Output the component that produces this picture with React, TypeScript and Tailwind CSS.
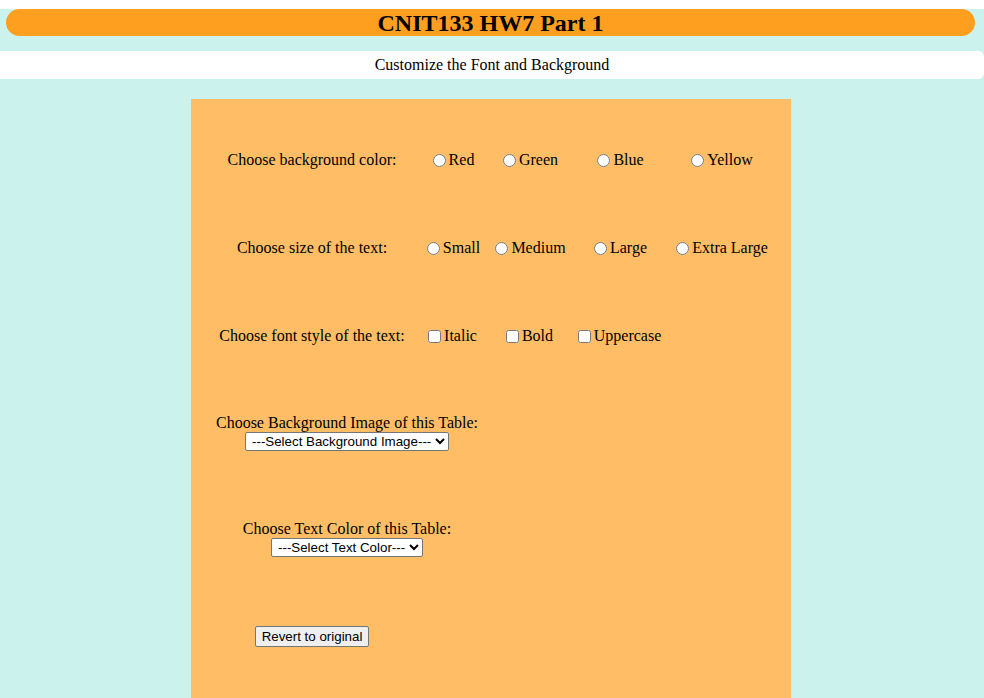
import React from "react";

const serif = "font-['Liberation_Serif','Times_New_Roman',serif]";
const sans = "font-['Liberation_Sans',Arial,sans-serif]";

const cols = "grid grid-cols-[214px_70px_84px_96px_107px] items-center";

interface OptProps {
  type: "radio" | "checkbox";
  name: string;
  label: string;
}

const Opt = (props: OptProps) => (
  <label className="flex justify-center items-center whitespace-nowrap pr-[6px]">
    <input
      type={props.type}
      name={props.name}
      className={
        props.type === "radio"
          ? "w-[13px] h-[13px] ml-[5px] mr-[3px]"
          : "w-[13px] h-[13px] ml-[3px] mr-[3px]"
      }
    />
    {props.label}
  </label>
);

export default function App() {
  return (
    <div className={`${serif} text-[16px] text-black bg-white h-[698px] overflow-hidden pt-[9px]`}>
      <div className="bg-[#ccf2ee] h-[689px]">
        <div className="pl-[6px] pr-[9px]">
          <h1 className="h-[27px] bg-[#ff9f1f] rounded-full flex items-center justify-center text-[24px] font-bold leading-none">
            CNIT133 HW7 Part 1
          </h1>
        </div>

        <div className="mt-[15px] h-[28px] bg-white rounded-r-md flex items-center justify-center">
          Customize the Font and Background
        </div>

        <div className="mt-[20px] ml-[191px] w-[600px] bg-[#ffbe66] h-[599px] pl-[14px] pt-[17px]">
          <div className={`${cols} h-[88px]`}>
            <div className="text-center">Choose background color:</div>
            <Opt type="radio" name="bg" label="Red" />
            <Opt type="radio" name="bg" label="Green" />
            <Opt type="radio" name="bg" label="Blue" />
            <Opt type="radio" name="bg" label="Yellow" />
          </div>

          <div className={`${cols} h-[88px]`}>
            <div className="text-center">Choose size of the text:</div>
            <Opt type="radio" name="size" label="Small" />
            <Opt type="radio" name="size" label="Medium" />
            <Opt type="radio" name="size" label="Large" />
            <Opt type="radio" name="size" label="Extra Large" />
          </div>

          <div className={`${cols} h-[88px]`}>
            <div className="text-center">Choose font style of the text:</div>
            <Opt type="checkbox" name="italic" label="Italic" />
            <Opt type="checkbox" name="bold" label="Bold" />
            <Opt type="checkbox" name="upper" label="Uppercase" />
            <div />
          </div>

          <div className={`${cols} h-[103px]`}>
            <div className="col-span-2 flex flex-col items-center">
              <div className="leading-[19px]">Choose Background Image of this Table:</div>
              <select className={`${sans} text-[13.33px] bg-white border border-[#767676] rounded-[2px] h-[19px] pl-[2px]`}>
                <option>---Select Background Image---</option>
              </select>
            </div>
          </div>

          <div className={`${cols} h-[109px]`}>
            <div className="col-span-2 flex flex-col items-center">
              <div className="leading-[19px]">Choose Text Color of this Table:</div>
              <select className={`${sans} text-[13.33px] bg-white border border-[#767676] rounded-[2px] h-[19px] pl-[2px]`}>
                <option>---Select Text Color---</option>
              </select>
            </div>
          </div>

          <div className={`${cols} h-[88px]`}>
            <div className="flex justify-center">
              <button className={`${sans} text-[13.33px] bg-[#efefef] border border-[#767676] rounded-[2px] px-[6px] py-[1px] leading-[17px]`}>
                Revert to original
              </button>
            </div>
          </div>
        </div>
      </div>
    </div>
  );
}
